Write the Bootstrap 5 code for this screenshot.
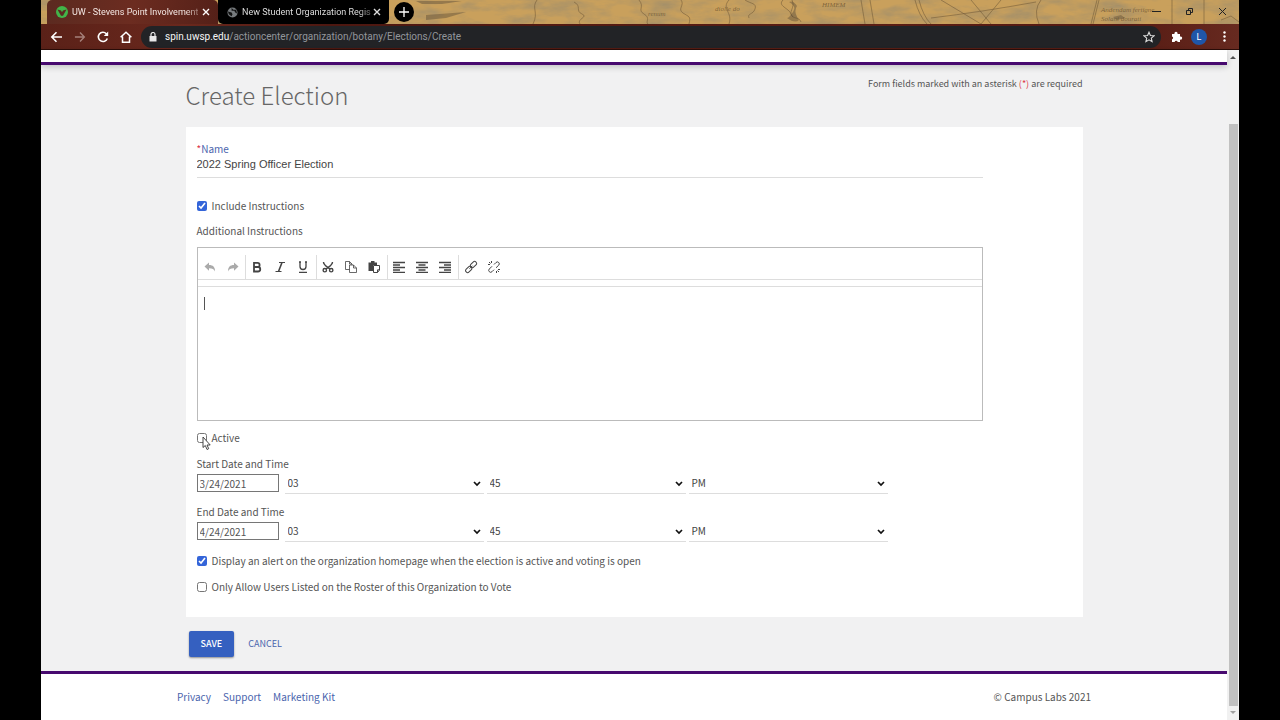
<!DOCTYPE html>
<html lang="en">
<head>
<meta charset="utf-8">
<meta name="viewport" content="width=device-width, initial-scale=1">
<title>Create Election</title>
<link href="https://cdn.jsdelivr.net/npm/bootstrap@5.3.0/dist/css/bootstrap.min.css" rel="stylesheet">
<style>
  :root { --purple: #47096f; --blue: #4a64ad; --ink: #555; --rule: #ddd; }
  body { background: #000; color: var(--ink); font-family: "Noto Sans CJK SC", "Source Sans Pro", sans-serif; font-size: 10px; line-height: 16px; padding: 0 41px; }
  a { color: var(--blue); text-decoration: none; }
  button, input, select { font: inherit; color: inherit; }

  /* browser frame */
  header { font-family: Roboto, "Open Sans", sans-serif; }
  .tab-strip { height: 24px; padding-left: 6px; background: #bd9350; position: relative; overflow: hidden; }
  .map-art { position: absolute; inset: 0; width: 100%; height: 100%; }
  .browser-tab { position: relative; width: 171px; height: 24px; padding: 0 8px 0 9px; color: #ddd; background: #000; border-radius: 0 0 5px 5px; font-size: 9px; }
  .browser-tab.current { color: #f3e6e2; background: linear-gradient(100deg, #5b2a20, #6c2c20 50%, #542018); border-radius: 5px 5px 0 0; }
  .tab-title { white-space: nowrap; -webkit-mask-image: linear-gradient(90deg, #000 90%, #0006); mask-image: linear-gradient(90deg, #000 90%, #0006); }
  .bare { display: inline-flex; align-items: center; justify-content: center; padding: 0; border: 0; background: none; }
  .new-tab { position: relative; width: 20px; height: 20px; border-radius: 50%; background: #000; margin-left: 5px; }
  .win-buttons { position: relative; gap: 24px; padding-right: 12px; }
  .nav-icons { gap: 11px; }
  .address-row { height: 26px; padding: 0 9px; background: linear-gradient(90deg, #5a2118, #6a281d 12%, #4d1710 24%, #5a1e14 70%, #551a12 90%, #672a20); border-bottom: 1px solid #2b0d09; }
  .address { height: 22px; border-radius: 11px; background: #222326; padding: 0 6px 0 8px; margin: 0 10px 0 9px; }
  .url-text { color: #92969b; white-space: nowrap; }
  .url-text b { color: #f5f5f5; font-weight: 400; }
  .avatar { width: 16px; height: 16px; border-radius: 50%; background: #1f56a8; color: #fff; font-size: 9px; }

  /* page */
  .page-top { height: 15px; background: #fff; border-bottom: 3px solid var(--purple); box-shadow: 0 2px 6px #0003; position: relative; }
  .page-main { background: #f1f1f2; padding-bottom: 14px; }
  .page-width { width: 100%; max-width: 897px; margin: 0 auto; }
  .page-head { height: 62px; }
  .page-head h1 { margin: 0; padding-top: 12px; font-size: 24px; line-height: 36px; font-weight: 300; color: #666; }
  .page-head p { margin: 0; padding-top: 11px; font-size: 9px; }
  .sheet { background: #fff; padding: 14px 100px 22px 11px; }
  .name-label { color: var(--blue); }
  .name-field { display: block; width: 100%; height: 21px; padding: 0 0 6px; border: 0; border-bottom: 1px solid var(--rule); font-family: "Liberation Sans", Arial, sans-serif; font-size: 11px; line-height: 14px; color: #444; }
  .check-row { display: flex; align-items: center; gap: 5px; }
  .check-row input { width: 10px; height: 10px; margin: 0; accent-color: #3465d9; }
  .gap-large { margin-top: 20px; } .gap-row { margin-top: 9px; } .gap-check { margin-top: 10px; } .gap-editor { margin-top: 8px; }

  .rich { border: 1px solid #bbb; }
  .rich-tools { height: 32px; padding: 7px 0 0 1px; border-bottom: 1px solid #ddd; }
  .rich-tools > div { display: flex; height: 24px; }
  .rich-tools > div + div { border-left: 1px solid #ddd; padding-right: 1px; }
  .rich-tools > div:last-child { padding-left: 1px; }
  .rich-tools button { width: 23px; height: 24px; color: #444; }
  .rich-tools button:disabled { color: #aaa; }
  .rich-tools svg { width: 14px; height: 14px; fill: none; stroke: currentColor; }
  .rich-bar { height: 7px; border-bottom: 1px solid #ddd; }
  .rich textarea { display: block; width: 100%; height: 133px; border: 0; padding: 8px 6px; resize: none; outline: 0; }
  .text-caret { position: absolute; left: 6px; top: 49px; width: 1px; height: 13px; background: #555; }

  .when { height: 21px; margin-top: 2px; }
  .when input { width: 82px; height: 18px; padding: 0 2px; border: 1px solid #767676; margin-right: 6px; }
  .when select { appearance: none; width: 199px; height: 20px; padding: 0 3px 1px; border: 0; border-bottom: 1px solid var(--rule); border-radius: 0; margin-right: 3px; color: #444;
    background: #fff url("data:image/svg+xml,%3Csvg xmlns='http://www.w3.org/2000/svg' viewBox='0 0 8 6'%3E%3Cpath d='M1 1l3 3 3-3' fill='none' stroke='%23111' stroke-width='1.700'/%3E%3C/svg%3E") no-repeat right 3px center / 8px 6px; }
  .actions { padding: 14px 0 0 3px; font-size: 9px; }
  .save { height: 26px; padding: 0 12px; border: 0; border-radius: 2px; background: #3560c0; color: #fff; font-weight: 500; box-shadow: 0 1px 2px #0006; }
  .cancel { margin-left: 14px; }
  .page-foot { flex: 1; min-height: 48px; background: #fff; border-top: 3px solid var(--purple); }
  .page-foot > div { width: 100%; max-width: 914px; margin: 0 auto; padding-top: 15px; gap: 12px; }
  .scroller { width: 12px; background: #f1f1f1; }
  .scroller span { display: block; margin: 0 1px 0 2px; flex: 1; background: #c1c1c1; }
  .scroller div { flex: 0 1 60px; }
  .scroller button { height: 14px; }
  .pointer { position: absolute; left: 5px; top: 6px; width: 9px; height: 15px; }
</style>
</head>
<body>
<div class="d-flex flex-column min-vh-100">
  <header>
    <div class="tab-strip d-flex align-items-center">
      <svg class="map-art" viewBox="0 0 1198 24" preserveAspectRatio="none" aria-hidden="true">
        <defs><filter id="grain" x="0" y="0" width="100%" height="100%"><feTurbulence type="fractalNoise" baseFrequency=".03 .09" numOctaves="5" seed="4"/><feColorMatrix values="0 0 0 0 .38  0 0 0 0 .28  0 0 0 0 .14  2 0 0 0 -.75"/></filter></defs>
        <rect width="1198" height="24" fill="#c9a05c"/>
        <rect width="1198" height="24" filter="url(#grain)"/>
        <g fill="none" stroke="#6f5836" stroke-opacity=".55">
          <path d="M496 0c-6 8 2 12-4 24M533 2c8 4 1 9 8 12s-6 5-2 10M598 0c6 7-2 10 5 14s1 8 4 10M640 0c4 5-4 9 2 13s8 3 6 11M688 0c-8 9 4 12 0 24M704 0c6 4 12 3 10 9s-8 4-6 9M742 0c-6 6 6 8 8 14s8 2 10 8M751 0c4 8-5 12 1 17"/>
          <path d="M820 0l4 24M829 0l4 24M874 0q4 16 12 24M878 0q4 16 12 24M890 18Q940 12 995 2M900 0l40 24M930 0l20 24M960 0l-20 24M1000 0q-8 10-2 24M1056 0l-6 24M1058 0l-6 24M1131 0v24M1163 0v24M1180 20l10-4 8 6"/>
        </g>
        <g fill="#5b4c38" fill-opacity=".45"><path d="M748 2q8 4 4 10t-6 6q8 6 12 2-6-8-2-14-4-6-8-4zM375 1h46l-20 3h-20zM385 15l40-3-20 6-20 2zM1072 17l8-2 4 3-8 2z"/></g>
        <g fill="#5a4528" fill-opacity=".65" font-family="Liberation Serif" font-style="italic" font-size="7"><text x="607" y="16">renum</text><text x="674" y="11">diolle do</text><text x="781" y="7">HIMEM</text><text x="1060" y="12">Andendam fertigne</text><text x="1060" y="21">Solani dourati</text></g>
      </svg>
      <div class="browser-tab current d-flex align-items-center">
        <svg class="flex-shrink-0" width="12" height="12" viewBox="0 0 12 12"><circle cx="6" cy="6" r="6" fill="#42b549"/><path d="M1.500 3.500l3.500 1 1 1.800 1-1.800 3.500-1L7 9.800H5z" fill="#5b2a20"/></svg>
        <span class="tab-title ms-1">UW - Stevens Point Involvement</span>
        <button class="bare ms-auto" aria-label="Close tab"><svg width="8" height="8" viewBox="0 0 8 8" stroke="#fff" stroke-width="1.400"><path d="M1 1l6 6M7 1L1 7"/></svg></button>
      </div>
      <div class="browser-tab d-flex align-items-center">
        <svg class="flex-shrink-0" width="11" height="11" viewBox="0 0 12 12"><circle cx="6" cy="6" r="5.500" fill="#777b7e"/><path d="M1 5l4 1 1 2-1 2-3-2zM5 1l2 2 3 0 1 4-2-1-1-2-3 0z" fill="#111"/></svg>
        <span class="tab-title ms-1">New Student Organization Regis</span>
        <button class="bare ms-auto" aria-label="Close tab"><svg width="8" height="8" viewBox="0 0 8 8" stroke="#ddd" stroke-width="1.400"><path d="M1 1l6 6M7 1L1 7"/></svg></button>
      </div>
      <button class="bare new-tab" aria-label="New tab"><svg width="10" height="10" viewBox="0 0 10 10" stroke="#fff" stroke-width="1.300"><path d="M5 0v10M0 5h10"/></svg></button>
      <div class="win-buttons d-flex align-items-center ms-auto">
        <button class="bare" aria-label="Minimize"><svg width="9" height="9" viewBox="0 0 9 9" stroke="#222"><path d="M0 3.500h9"/></svg></button>
        <button class="bare" aria-label="Restore"><svg width="9" height="9" viewBox="0 0 9 9" fill="none" stroke="#222"><path d="M1.500 2.500h4v4h-4zM3.500 2V.5h4v4H6"/></svg></button>
        <button class="bare" aria-label="Close"><svg width="9" height="9" viewBox="0 0 9 9" stroke="#222"><path d="M1 0l7 7M8 0L1 7"/></svg></button>
      </div>
    </div>
    <div class="address-row d-flex align-items-center">
      <div class="nav-icons d-flex align-items-center">
        <button class="bare" aria-label="Back"><svg width="13" height="12" viewBox="0 0 13 12" fill="none" stroke="#fff" stroke-width="1.600"><path d="M12 6H2M6.500 1.200L1.800 6l4.700 4.800"/></svg></button>
        <button class="bare" aria-label="Forward"><svg width="12" height="12" viewBox="0 0 13 12" fill="none" stroke="#a5807a" stroke-width="1.500"><path d="M1 6h10M6.500 1.200L11.200 6l-4.700 4.800"/></svg></button>
        <button class="bare" aria-label="Reload"><svg width="12" height="12" viewBox="0 0 12 12" fill="none" stroke="#fff" stroke-width="1.600"><path d="M10.300 7.500A4.600 4.600 0 1 1 9.300 2.700L10.300 3.800"/><path d="M11.200.5v4.400H6.800z" fill="#fff" stroke="none"/></svg></button>
        <button class="bare" aria-label="Home"><svg width="12" height="12" viewBox="0 0 12 12" fill="none" stroke="#fff" stroke-width="1.500"><path d="M.6 6.300L6 1.200l5.400 5.100M2.500 5.500v5.700h7V5.500"/></svg></button>
      </div>
      <div class="address d-flex align-items-center flex-grow-1">
        <svg width="8" height="10" viewBox="0 0 8 10"><path d="M.5 4h7v5.500h-7z" fill="#e8e8e8"/><path d="M2 4V2.500a2 2 0 0 1 4 0V4" fill="none" stroke="#e8e8e8" stroke-width="1.200"/></svg>
        <span class="url-text ms-2"><b>spin.uwsp.edu</b>/actioncenter/organization/botany/Elections/Create</span>
        <button class="bare ms-auto" aria-label="Bookmark"><svg width="12" height="12" viewBox="0 0 12 12" fill="none" stroke="#ddd" stroke-width="1.100"><path d="M6 1.200l1.400 3.300 3.600.3-2.700 2.400.8 3.500L6 8.800l-3.100 1.900.8-3.500L1 4.800l3.600-.3z"/></svg></button>
      </div>
      <button class="bare" aria-label="Extensions"><svg width="12" height="12" viewBox="0 0 12 12" fill="#fff"><path d="M1 3h2.500a1.600 1.600 0 1 1 3 0H9v2.600a1.600 1.600 0 1 1 0 3V11H6.700a1.600 1.600 0 0 0-3.100 0H1V8.300a1.500 1.500 0 0 0 0-2.900z"/></svg></button>
      <button class="bare avatar ms-2 me-3" aria-label="Profile">L</button>
      <button class="bare pe-1" aria-label="Menu"><svg width="3" height="11" viewBox="0 0 3 11" fill="#fff"><circle cx="1.500" cy="1.500" r="1.200"/><circle cx="1.500" cy="5.500" r="1.200"/><circle cx="1.500" cy="9.500" r="1.200"/></svg></button>
    </div>
  </header>

  <div class="d-flex flex-grow-1">
    <div class="d-flex flex-column flex-grow-1">
      <div class="page-top"></div>
      <main class="page-main">
        <form class="page-width">
          <div class="page-head d-flex justify-content-between">
            <h1>Create Election</h1>
            <p>Form fields marked with an asterisk <span class="text-danger">(*)</span> are required</p>
          </div>
          <div class="sheet">
            <label class="name-label d-block" for="name"><span class="text-danger">*</span>Name</label>
            <input id="name" class="name-field" type="text" value="2022 Spring Officer Election">
            <div class="check-row gap-large"><input type="checkbox" id="inc" checked><label for="inc">Include Instructions</label></div>
            <label class="d-block gap-row" for="extra">Additional Instructions</label>
            <div class="rich position-relative gap-editor">
              <div class="rich-tools d-flex" role="toolbar" aria-label="Formatting">
                <div>
                  <button type="button" class="bare" disabled aria-label="Undo"><svg viewBox="0 0 14 14"><path d="M6 2.500v2.600c4 0 6 2 6 6.400-1-2.500-2.500-3.300-6-3.300v2.600L1.500 6.600z" fill="currentColor" stroke="none"/></svg></button>
                  <button type="button" class="bare" disabled aria-label="Redo"><svg viewBox="0 0 14 14"><path d="M8 2.500v2.600c-4 0-6 2-6 6.400 1-2.500 2.500-3.300 6-3.300v2.600l4.500-4.200z" fill="currentColor" stroke="none"/></svg></button>
                </div>
                <div>
                  <button type="button" class="bare" aria-label="Bold"><svg viewBox="0 0 14 14" stroke-width="1.800"><path d="M4 2.800h3.500a2 2 0 0 1 0 4.200H4zM4 7h4a2.200 2.200 0 0 1 0 4.500H4zM4 2v10"/></svg></button>
                  <button type="button" class="bare" aria-label="Italic"><svg viewBox="0 0 14 14" stroke-width="1.100"><path d="M6 2.500h6M2.500 11.500h6"/><path d="M9 2.500l-3.500 9" stroke-width="1.600"/></svg></button>
                  <button type="button" class="bare" aria-label="Underline"><svg viewBox="0 0 14 14" stroke-width="1.300"><path d="M4 2v4.500a3 3 0 0 0 6 0V2M3 12.300h8M3 2h2M9 2h2"/></svg></button>
                </div>
                <div>
                  <button type="button" class="bare" aria-label="Cut"><svg viewBox="0 0 14 14" stroke-width="1.400"><path d="M2.500 2c0 3 2.500 4 6.500 7M11.500 2c0 3-2.500 4-6.500 7"/><circle cx="3.800" cy="10.200" r="1.700"/><circle cx="10.200" cy="10.200" r="1.700"/></svg></button>
                  <button type="button" class="bare" aria-label="Copy"><svg viewBox="0 0 14 14" stroke-width=".8"><path d="M5.500 9.500h-4v-8h4l2.500 2.500v1M5.500 1.500V4H8M5.500 5h4L12.500 8v4.500h-7zM9.500 5v3h3"/></svg></button>
                  <button type="button" class="bare" aria-label="Paste"><svg viewBox="0 0 14 14"><path d="M1.500 2.500h2.500V1h3.500v1.500H10V5H6v6H1.500z" fill="currentColor" stroke="none"/><path d="M6.500 5.500h6V10l-2 2.500h-4zM12.500 9.800h-2v2.700"/></svg></button>
                </div>
                <div>
                  <button type="button" class="bare" aria-label="Align left"><svg viewBox="0 0 14 14" stroke-width="1.300"><path d="M1 2.500h12M1 5h7M1 7.500h12M1 10h7M1 12.300h12"/></svg></button>
                  <button type="button" class="bare" aria-label="Align center"><svg viewBox="0 0 14 14" stroke-width="1.300"><path d="M1 2.500h12M3.500 5h7M1 7.500h12M3.500 10h7M1 12.300h12"/></svg></button>
                  <button type="button" class="bare" aria-label="Align right"><svg viewBox="0 0 14 14" stroke-width="1.300"><path d="M1 2.500h12M6 5h7M1 7.500h12M6 10h7M1 12.300h12"/></svg></button>
                </div>
                <div>
                  <button type="button" class="bare" aria-label="Link"><svg viewBox="0 0 14 14"><rect x="6" y="2.500" width="7" height="4" rx="2" transform="rotate(-45 9.500 4.500)"/><rect x="1.200" y="7.500" width="7" height="4" rx="2" transform="rotate(-45 4.700 9.500)"/><path d="M5.500 8.700l3-3"/></svg></button>
                  <button type="button" class="bare" aria-label="Unlink"><svg viewBox="0 0 14 14"><path d="M7 4.500l2-2a1.900 1.900 0 0 1 2.700 2.700L9 7.800M7 9.700l-2 2A1.900 1.900 0 0 1 2.300 9L5 6.300M4.500 1v2M1 4.500h2M2 2l1.500 1.500M9.500 11v2M11 9.500h2M10.500 10.500L12 12"/></svg></button>
                </div>
              </div>
              <div class="rich-bar"></div>
              <textarea id="extra"></textarea>
              <span class="text-caret"></span>
            </div>
            <div class="check-row gap-row position-relative"><input type="checkbox" id="act"><label for="act">Active</label>
              <svg class="pointer" viewBox="0 0 9 15" aria-hidden="true"><path d="M1 1v10.500l2.300-2 1.700 4 1.700-.8L5 9h3.200z" fill="#fff" stroke="#333" stroke-width=".9"/></svg>
            </div>
            <label class="d-block gap-check" for="sd">Start Date and Time</label>
            <div class="when d-flex align-items-start">
              <input id="sd" type="text" value="3/24/2021">
              <select aria-label="Start hour"><option>03</option></select>
              <select aria-label="Start minute"><option>45</option></select>
              <select aria-label="Start AM or PM"><option>PM</option></select>
            </div>
            <label class="d-block gap-row" for="ed">End Date and Time</label>
            <div class="when d-flex align-items-start">
              <input id="ed" type="text" value="4/24/2021">
              <select aria-label="End hour"><option>03</option></select>
              <select aria-label="End minute"><option>45</option></select>
              <select aria-label="End AM or PM"><option>PM</option></select>
            </div>
            <div class="check-row gap-check"><input type="checkbox" id="alert" checked><label for="alert">Display an alert on the organization homepage when the election is active and voting is open</label></div>
            <div class="check-row gap-check"><input type="checkbox" id="only"><label for="only">Only Allow Users Listed on the Roster of this Organization to Vote</label></div>
          </div>
          <div class="actions d-flex align-items-center">
            <button type="submit" class="save">SAVE</button>
            <a href="#" class="cancel">CANCEL</a>
          </div>
        </form>
      </main>
      <footer class="page-foot">
        <div class="d-flex">
          <a href="#">Privacy</a><a href="#">Support</a><a href="#">Marketing Kit</a>
          <span class="ms-auto">© Campus Labs 2021</span>
        </div>
      </footer>
    </div>
    <div class="scroller d-flex flex-column">
      <button class="bare" aria-label="Scroll up"><svg width="6" height="4" viewBox="0 0 6 4" fill="#505050"><path d="M0 4l3-3 3 3z"/></svg></button>
      <div></div>
      <span></span>
      <button class="bare" aria-label="Scroll down"><svg width="6" height="4" viewBox="0 0 6 4" fill="#a0a0a0"><path d="M0 0l3 3 3-3z"/></svg></button>
    </div>
  </div>
</div>
<script src="https://cdn.jsdelivr.net/npm/bootstrap@5.3.0/dist/js/bootstrap.bundle.min.js"></script>
</body>
</html>
